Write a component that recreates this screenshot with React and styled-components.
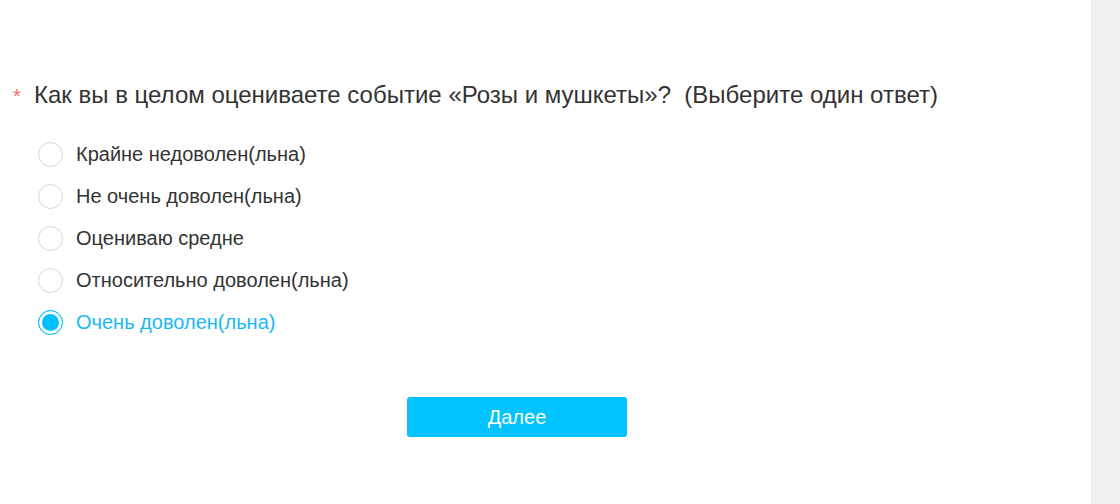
import styled, { createGlobalStyle } from 'styled-components';

const GlobalStyle = createGlobalStyle`
	html, body {
		margin: 0;
		padding: 0;
		background: #fff;
		font-family: "Liberation Sans", Arial, sans-serif;
	}
`;

const OPTIONS = [
	'Крайне недоволен(льна)',
	'Не очень доволен(льна)',
	'Оцениваю средне',
	'Относительно доволен(льна)',
	'Очень доволен(льна)',
];

const App = () => {
	const selected = 4;

	return (
		<Page>
			<GlobalStyle />
			<Main>
				<Question>
					<Required>*</Required>
					<QuestionText>
						Как вы в целом оцениваете событие «Розы и мушкеты»?&nbsp; (Выберите один ответ)
					</QuestionText>
				</Question>
				<OptionList>
					{OPTIONS.map((label, i) => (
						<Option key={label} $active={i === selected}>
							<Radio $active={i === selected} />
							{label}
						</Option>
					))}
				</OptionList>
				<Footer>
					<NextButton>Далее</NextButton>
				</Footer>
			</Main>
			<Sidebar />
		</Page>
	);
};

const Page = styled.div`
	display: flex;
	height: 504px;
	width: 1120px;
	overflow: hidden;
`;

const Main = styled.div`
	flex: 1;
	min-width: 0;
	padding-top: 79px;
`;

const Sidebar = styled.div`
	width: 29px;
	background: #f0f0f0;
`;

const Question = styled.div`
	display: flex;
	align-items: baseline;
	padding-left: 13px;
`;

const Required = styled.span`
	color: #f56c6c;
	font-size: 20px;
	width: 21px;
`;

const QuestionText = styled.h2`
	margin: 0;
	font-size: 24px;
	font-weight: 400;
	line-height: 32px;
	color: #333;
	white-space: nowrap;
`;

const OptionList = styled.div`
	display: flex;
	flex-direction: column;
	gap: 16px;
	padding: 30px 0 0 38px;
`;

const Option = styled.label`
	display: flex;
	align-items: center;
	gap: 13px;
	height: 26px;
	font-size: 20px;
	color: ${(p) => (p.$active ? '#1ab8f3' : '#333')};
`;

const Radio = styled.span`
	box-sizing: border-box;
	width: 25px;
	height: 25px;
	border-radius: 50%;
	border: 1px solid ${(p) => (p.$active ? '#00bfff' : '#d8d8d8')};
	background: ${(p) => (p.$active ? '#00bfff' : '#fff')};
	box-shadow: ${(p) => (p.$active ? 'inset 0 0 0 3px #fff' : 'none')};
	flex-shrink: 0;
`;

const Footer = styled.div`
	display: flex;
	justify-content: center;
	padding: 62px 57px 0 0;
`;

const NextButton = styled.button`
	width: 220px;
	height: 40px;
	border: none;
	border-radius: 3px;
	background: #00c3ff;
	color: #fff;
	font-family: "Liberation Sans", Arial, sans-serif;
	font-size: 20px;
	cursor: pointer;
`;

export default App;
